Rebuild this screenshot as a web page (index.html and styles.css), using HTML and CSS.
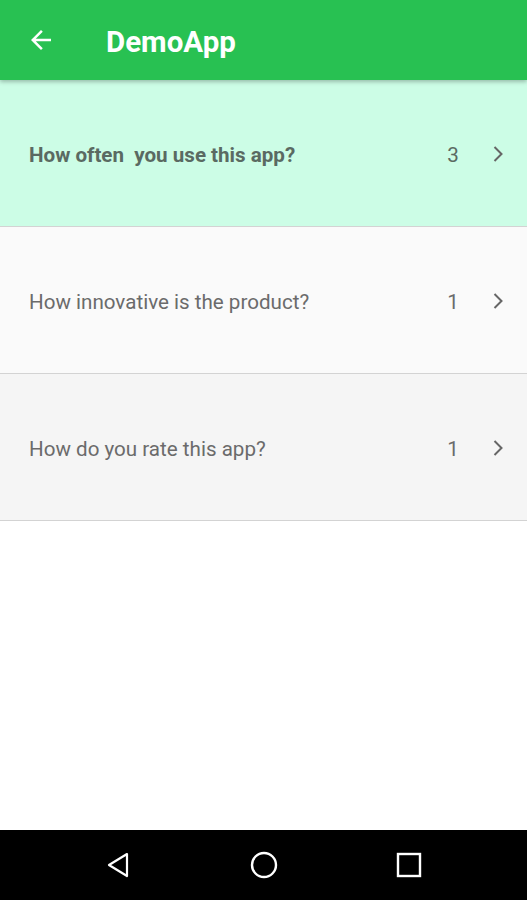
FILE: index.html
```html
<!DOCTYPE html>
<html>
<head>
<meta charset="utf-8">
<link rel="stylesheet" href="styles.css">
</head>
<body>
<div class="screen">
  <header class="appbar">
    <svg class="back" width="30" height="30" viewBox="0 0 24 24"><path d="M20 11H7.83l5.59-5.59L12 4l-8 8 8 8 1.41-1.41L7.83 13H20v-2z" fill="#fff"/></svg>
    <div class="title">DemoApp</div>
  </header>
  <main class="list">
    <div class="row row-active">
      <span class="label bold">How often&nbsp; you use this app?</span>
      <span class="count">3</span>
      <svg class="chev" width="14" height="20" viewBox="0 0 14 20"><path d="M3.5 3l7 7-7 7" stroke="#666" stroke-width="2" fill="none"/></svg>
    </div>
    <div class="row row-a">
      <span class="label">How innovative is the product?</span>
      <span class="count">1</span>
      <svg class="chev" width="14" height="20" viewBox="0 0 14 20"><path d="M3.5 3l7 7-7 7" stroke="#666" stroke-width="2" fill="none"/></svg>
    </div>
    <div class="row row-b">
      <span class="label">How do you rate this app?</span>
      <span class="count">1</span>
      <svg class="chev" width="14" height="20" viewBox="0 0 14 20"><path d="M3.5 3l7 7-7 7" stroke="#666" stroke-width="2" fill="none"/></svg>
    </div>
  </main>
  <nav class="navbar">
    <svg width="28" height="30" viewBox="0 0 28 30"><path d="M22 4 L4 15 L22 26 Z" stroke="#fff" stroke-width="2.2" fill="none" stroke-linejoin="round"/></svg>
    <svg width="30" height="30" viewBox="0 0 30 30"><circle cx="15" cy="15" r="12" stroke="#fff" stroke-width="2.4" fill="none"/></svg>
    <svg width="28" height="28" viewBox="0 0 28 28"><rect x="3" y="3" width="22" height="22" stroke="#fff" stroke-width="2.4" fill="none"/></svg>
  </nav>
</div>
</body>
</html>
```
FILE: styles.css
```css
html, body { margin: 0; padding: 0; }
body { font-family: Roboto, "Noto Sans", sans-serif; background: #fff; }
.screen { width: 527px; height: 900px; display: flex; flex-direction: column; }
.appbar {
  height: 80px; background: #28c152; display: flex; align-items: center;
  box-shadow: 0 2px 4px rgba(0,0,0,0.25); position: relative; z-index: 1; flex: none;
}
.back { margin-left: 26px; margin-top: 0; }
.title { color: #fff; font-weight: 700; font-size: 29.5px; margin-left: 50px; margin-top: 3px; }
.list { flex: 1; display: flex; flex-direction: column; }
.row {
  height: 146px; box-sizing: content-box; display: flex; align-items: center; border-bottom: 1px solid #d3d3d3;
  color: #6b6b6b; font-size: 20.6px; flex: none; padding-left: 29px; padding-right: 22px;
}
.label { flex: 1; padding-top: 3px; }
.count { width: 20px; text-align: center; margin-right: 28px; padding-top: 3px; }
.row-active { background: #ccfde6; color: #5a6a62; }
.row-a { background: #fafafa; }
.row-b { background: #f5f5f5; }
.bold { font-weight: 700; }
.chev { flex: none; margin-top: 2px; }
.navbar {
  height: 70px; background: #000; display: flex; justify-content: center; align-items: center;
  gap: 116px; flex: none;
}
```
